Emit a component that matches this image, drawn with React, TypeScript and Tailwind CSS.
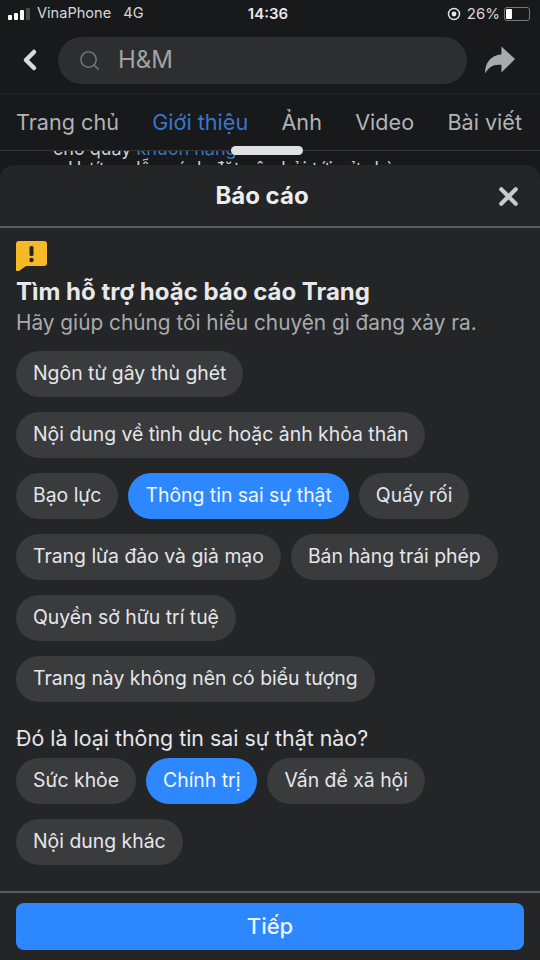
import React from 'react';
import { ChevronLeft, Search, X } from 'lucide-react';

const Chip = ({ label, active }: { label: string; active?: boolean }) => (
    <div
        className={`h-[46px] px-[17px] rounded-full flex items-center text-[19.4px] whitespace-nowrap ${
            active ? 'bg-[#2d88ff] text-[#f2f6fb]' : 'bg-[#3a3b3c] text-[#e4e6eb]'
        }`}
    >
        {label}
    </div>
);

const ChipRow = ({ children }: { children: React.ReactNode }) => (
    <div className="flex gap-[10px]">{children}</div>
);

const Tab = ({ label, active }: { label: string; active?: boolean }) => (
    <span className={active ? 'text-[#3a76c8]' : 'text-[#b0b3b8]'}>{label}</span>
);

export default function App() {
    return (
        <div className="w-[540px] h-[960px] overflow-hidden bg-[#18191a] flex flex-col font-['Inter',sans-serif]">
            {/* status bar */}
            <div className="h-[28px] shrink-0 pl-[8px] pr-[10px] flex items-center justify-between text-[14.6px] text-[#d6d7d9]">
                <div className="flex items-center w-[180px]">
                    <div className="flex items-end gap-[2px] h-[12px]">
                        <div className="w-[4px] h-[5px] bg-white rounded-[1px]" />
                        <div className="w-[4px] h-[7px] bg-white rounded-[1px]" />
                        <div className="w-[4px] h-[10px] bg-white rounded-[1px]" />
                        <div className="w-[4px] h-[12px] bg-[#4a4b4d] rounded-[1px]" />
                    </div>
                    <span className="ml-[7px]">VinaPhone</span>
                    <span className="ml-[12px]">4G</span>
                </div>
                <span className="-ml-[2px] font-semibold text-[15px] text-[#e8e9ea]">14:36</span>
                <div className="flex items-center justify-end w-[180px]">
                    <svg width="14" height="14" viewBox="0 0 14 14" fill="none" className="mr-[6px]">
                        <circle cx="7" cy="7" r="5.5" stroke="#e4e6eb" strokeWidth="1.4" />
                        <circle cx="7" cy="7" r="2.4" fill="#e4e6eb" />
                    </svg>
                    <span className="text-[15px]">26%</span>
                    <div className="ml-[4px] w-[26px] h-[14px] border border-[#77787a] rounded-[3px] p-[1px]">
                        <div className="w-[6px] h-full bg-white rounded-[1px]" />
                    </div>
                </div>
            </div>

            {/* search row */}
            <div className="h-[66px] shrink-0 pb-[1px] flex items-center border-b border-[#232425]">
                <div className="w-[58px] flex justify-center pl-[2px]">
                    <ChevronLeft size={32} strokeWidth={3.4} className="text-[#d8dadf]" />
                </div>
                <div className="w-[409px] h-[47px] rounded-full bg-[#2d2e2f] flex items-center pl-[20px]">
                    <Search size={23} strokeWidth={1.5} className="text-[#77787b]" />
                    <span className="ml-[17px] text-[24px] text-[#a0a2a6]">H&amp;M</span>
                </div>
                <div className="flex-1 flex justify-center pr-[9px]">
                    <svg width="31" height="30" viewBox="0 0 32 30" fill="#a8aaae">
                        <path d="M18 1l14 13-14 14v-8C10 19 5 22 1 29 1 18 7 10 18 9V1z" />
                    </svg>
                </div>
            </div>

            {/* tabs */}
            <div className="relative h-[57px] shrink-0 border-b border-[#333435] pr-[18px] pl-[16px] flex items-center justify-between text-[21.6px]">
                <Tab label="Trang chủ" />
                <Tab label="Giới thiệu" active />
                <Tab label="Ảnh" />
                <Tab label="Video" />
                <Tab label="Bài viết" />
                <div className="absolute left-[231px] top-[52px] w-[72px] h-[9px] rounded-full bg-[#dfe0e2]" />
            </div>

            {/* page text peeking above the sheet */}
            <div className="h-[14px] shrink-0 overflow-hidden text-[18px] leading-[20px] text-[#d0d1d3]">
                <div className="-mt-[12px] pl-[53px]">
                    cho quầy <span className="text-[#3a76c8]">khuôn hàng</span>
                </div>
                <div className="pl-[68px]">Hướng dẫn cách đặt câu hỏi tới cửa hàng</div>
            </div>

            {/* report sheet */}
            <div className="flex-1 min-h-0 bg-[#242526] rounded-t-[14px] flex flex-col">
                <div className="relative h-[63px] shrink-0 flex items-center justify-center border-b-2 border-[#5a5b5d]">
                    <span className="-ml-[16px] text-[24px] font-bold text-[#eceded]">Báo cáo</span>
                    <X size={29} strokeWidth={3.4} className="absolute right-[17px] top-[17px] text-[#c8cace]" />
                </div>

                <div className="flex-1 min-h-0 px-[16px] pt-[13px]">
                    <svg width="31" height="30" viewBox="0 0 31 30" className="block">
                        <path d="M3 0h25a3 3 0 0 1 3 3v19a3 3 0 0 1-3 3H10l-7 5c-1 .6-3 .4-3-1V3a3 3 0 0 1 3-3z" fill="#f5bb27" />
                        <rect x="13.5" y="5" width="4" height="10" rx="1.5" fill="#2a2420" />
                        <circle cx="15.5" cy="19" r="2.2" fill="#2a2420" />
                    </svg>
                    <h2 className="mt-[5px] text-[24px] leading-[32px] font-bold text-[#e7e8ea]">
                        Tìm hỗ trợ hoặc báo cáo Trang
                    </h2>
                    <p className="text-[20.8px] leading-[29px] text-[#a9abaf]">
                        Hãy giúp chúng tôi hiểu chuyện gì đang xảy ra.
                    </p>

                    <div className="mt-[14px] flex flex-col gap-[15px]">
                        <ChipRow>
                            <Chip label="Ngôn từ gây thù ghét" />
                        </ChipRow>
                        <ChipRow>
                            <Chip label="Nội dung về tình dục hoặc ảnh khỏa thân" />
                        </ChipRow>
                        <ChipRow>
                            <Chip label="Bạo lực" />
                            <Chip label="Thông tin sai sự thật" active />
                            <Chip label="Quấy rối" />
                        </ChipRow>
                        <ChipRow>
                            <Chip label="Trang lừa đảo và giả mạo" />
                            <Chip label="Bán hàng trái phép" />
                        </ChipRow>
                        <ChipRow>
                            <Chip label="Quyền sở hữu trí tuệ" />
                        </ChipRow>
                        <ChipRow>
                            <Chip label="Trang này không nên có biểu tượng" />
                        </ChipRow>
                    </div>

                    <p className="mt-[21px] text-[21.4px] leading-[30px] text-[#e4e6eb]">
                        Đó là loại thông tin sai sự thật nào?
                    </p>
                    <div className="mt-[5px] flex flex-col gap-[15px]">
                        <ChipRow>
                            <Chip label="Sức khỏe" />
                            <Chip label="Chính trị" active />
                            <Chip label="Vấn đề xã hội" />
                        </ChipRow>
                        <ChipRow>
                            <Chip label="Nội dung khác" />
                        </ChipRow>
                    </div>
                </div>

                <div className="h-[69px] shrink-0 border-t-2 border-[#5a5b5d] px-[16px] pt-[10px]">
                    <div className="h-[47px] rounded-[8px] bg-[#2d88ff] flex items-center justify-center text-[22px] font-medium text-[#eaf3ff]">
                        Tiếp
                    </div>
                </div>
            </div>
        </div>
    );
}
